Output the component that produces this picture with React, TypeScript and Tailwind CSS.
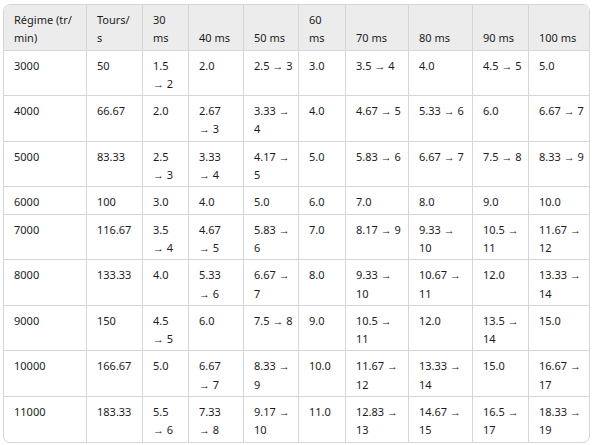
import React from "react";

const widths = [83, 56, 46, 55, 55, 47, 63, 64, 56, 60];

const header = [
  "Régime (tr/|min)",
  "Tours/|s",
  "30|ms",
  "40 ms",
  "50 ms",
  "60|ms",
  "70 ms",
  "80 ms",
  "90 ms",
  "100 ms",
];

const rows: string[][] = [
  ["3000", "50", "1.5|→ 2", "2.0", "2.5 → 3", "3.0", "3.5 → 4", "4.0", "4.5 → 5", "5.0"],
  ["4000", "66.67", "2.0", "2.67|→ 3", "3.33 →|4", "4.0", "4.67 → 5", "5.33 → 6", "6.0", "6.67 → 7"],
  ["5000", "83.33", "2.5|→ 3", "3.33|→ 4", "4.17 →|5", "5.0", "5.83 → 6", "6.67 → 7", "7.5 → 8", "8.33 → 9"],
  ["6000", "100", "3.0", "4.0", "5.0", "6.0", "7.0", "8.0", "9.0", "10.0"],
  ["7000", "116.67", "3.5|→ 4", "4.67|→ 5", "5.83 →|6", "7.0", "8.17 → 9", "9.33 →|10", "10.5 →|11", "11.67 →|12"],
  ["8000", "133.33", "4.0", "5.33|→ 6", "6.67 →|7", "8.0", "9.33 →|10", "10.67 →|11", "12.0", "13.33 →|14"],
  ["9000", "150", "4.5|→ 5", "6.0", "7.5 → 8", "9.0", "10.5 →|11", "12.0", "13.5 →|14", "15.0"],
  ["10000", "166.67", "5.0", "6.67|→ 7", "8.33 →|9", "10.0", "11.67 →|12", "13.33 →|14", "15.0", "16.67 →|17"],
  ["11000", "183.33", "5.5|→ 6", "7.33|→ 8", "9.17 →|10", "11.0", "12.83 →|13", "14.67 →|15", "16.5 →|17", "18.33 →|19"],
];

function Lines({ text }: { text: string }) {
  return (
    <>
      {text.split("|").map((l, i) => (
        <span key={i} className="block whitespace-nowrap">
          {l}
        </span>
      ))}
    </>
  );
}

export default function App() {
  return (
    <div className="min-h-[445px] w-[593px] bg-white pl-[3px] pt-[4px]">
      <div
        className="w-[587px] overflow-hidden rounded-[7px] border border-[#d6d6d6] text-[#1c1c1c]"
        style={{ fontFamily: '"Noto Sans", "Open Sans", sans-serif' }}
      >
        <table className="w-[585px] table-fixed border-separate border-spacing-0 text-[11px] leading-[18.3px]">
          <colgroup>
            {widths.map((w, i) => (
              <col key={i} style={{ width: w }} />
            ))}
          </colgroup>
          <thead>
            <tr className="bg-[#ececec]">
              {header.map((h, i) => (
                <th
                  key={i}
                  className={`border-b border-[#d6d6d6] pl-[10px] pr-[4px] pt-[6px] pb-[2px] text-left align-bottom font-normal ${
                    i < header.length - 1 ? "border-r" : ""
                  }`}
                >
                  <Lines text={h} />
                </th>
              ))}
            </tr>
          </thead>
          <tbody>
            {rows.map((r, ri) => (
              <tr key={ri}>
                {r.map((c, ci) => (
                  <td
                    key={ci}
                    className={`border-[#d6d6d6] pl-[10px] pr-[4px] pt-[6px] pb-[2px] align-top ${
                      ci < r.length - 1 ? "border-r" : ""
                    } ${ri < rows.length - 1 ? "border-b" : ""}`}
                  >
                    <Lines text={c} />
                  </td>
                ))}
              </tr>
            ))}
          </tbody>
        </table>
      </div>
    </div>
  );
}
